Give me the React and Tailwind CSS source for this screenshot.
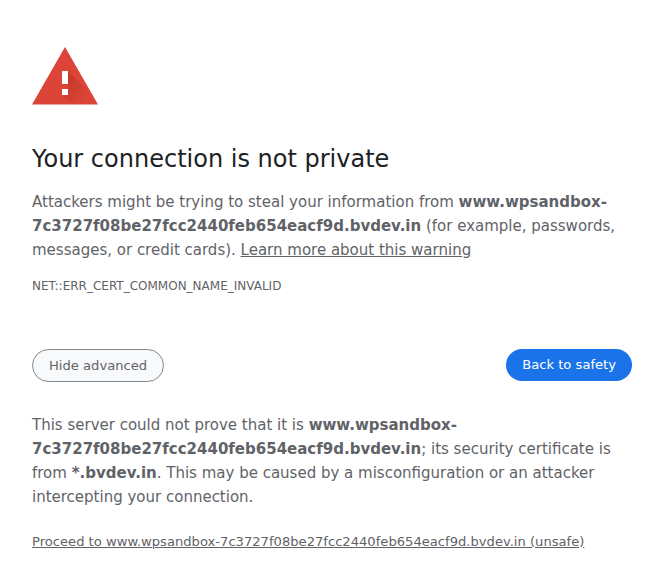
export default function App() {
  return (
    <div className="min-h-screen bg-white px-8 pt-[47px] font-['DejaVu_Sans',sans-serif] text-[#5f6368]">
      {/* warning icon */}
      <svg width="66" height="58" viewBox="0 0 66 58" className="block">
        <defs>
          <linearGradient id="shade" gradientUnits="userSpaceOnUse" x1="34" y1="36" x2="52" y2="54">
            <stop offset="0" stopColor="#a52714" stopOpacity="0.35" />
            <stop offset="1" stopColor="#a52714" stopOpacity="0" />
          </linearGradient>
          <clipPath id="tri">
            <path d="M33 0 L66 57.5 L0 57.5 Z" />
          </clipPath>
        </defs>
        <path d="M33 0 L66 57.5 L0 57.5 Z" fill="#db4437" />
        <path d="M36 24 L60 48 L60 57.5 L39.5 57.5 L30 48 L36 48 Z" fill="url(#shade)" clipPath="url(#tri)" />
        <rect x="30" y="24" width="6" height="13" fill="#fff" />
        <rect x="30" y="42" width="6" height="6" fill="#fff" />
      </svg>

      <h1 className="mt-[38px] text-[24px] leading-[32px] font-normal text-[#202124]">
        Your connection is not private
      </h1>

      <p className="mt-[15px] text-[15px] leading-[24px]">
        Attackers might be trying to steal your information from{" "}
        <strong>www.wpsandbox-7c3727f08be27fcc2440feb654eacf9d.bvdev.in</strong> (for example, passwords, messages, or
        credit cards). <span className="underline">Learn more about this warning</span>
      </p>

      <div className="mt-[16px] text-[12px] leading-[16px] uppercase">NET::ERR_CERT_COMMON_NAME_INVALID</div>

      <div className="mt-[55px] flex items-start justify-between">
        <button className="h-[33px] rounded-full border border-[#80868b] bg-[#f8f9fa] px-4 text-[13.125px] text-[#5f6368]">
          Hide advanced
        </button>
        <button className="h-[32px] rounded-full bg-[#1a73e8] px-4 text-[13.125px] text-white">Back to safety</button>
      </div>

      <p className="mt-[31px] text-[15px] leading-[24px]">
        This server could not prove that it is{" "}
        <strong>www.wpsandbox-7c3727f08be27fcc2440feb654eacf9d.bvdev.in</strong>; its security certificate is from{" "}
        <strong>*.bvdev.in</strong>. This may be caused by a misconfiguration or an attacker intercepting your
        connection.
      </p>

      <p className="mt-[24px] text-[13.125px] leading-[18px] underline">
        Proceed to www.wpsandbox-7c3727f08be27fcc2440feb654eacf9d.bvdev.in (unsafe)
      </p>
    </div>
  );
}
